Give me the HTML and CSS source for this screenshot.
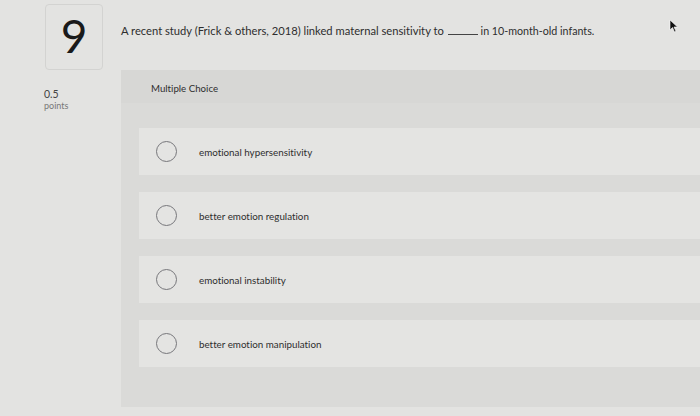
FILE: index.html
```html
<!DOCTYPE html>
<html>
<head>
<meta charset="utf-8">
<link rel="stylesheet" href="styles.css">
</head>
<body>
<div class="page">
  <div class="left">
    <div class="numbox">9</div>
    <div class="points">
      <div class="pts-val">0.5</div>
      <div class="pts-lbl">points</div>
    </div>
  </div>
  <div class="right">
    <div class="question">A recent study (Frick &amp; others, 2018) linked maternal sensitivity to <span class="blank"></span> <span class="tail">in 10-month-old infants.</span></div>
    <div class="panel">
      <div class="panel-head">Multiple Choice</div>
      <div class="options">
        <div class="option"><span class="radio"></span><span class="opt-text">emotional hypersensitivity</span></div>
        <div class="option"><span class="radio"></span><span class="opt-text">better emotion regulation</span></div>
        <div class="option"><span class="radio"></span><span class="opt-text">emotional instability</span></div>
        <div class="option"><span class="radio"></span><span class="opt-text">better emotion manipulation</span></div>
      </div>
    </div>
  </div>
</div>
<svg class="cursor" width="10" height="14" viewBox="0 0 10 14"><path d="M1 1 L1 11 L3.5 8.5 L5.5 13 L7 12.3 L5 8 L8.5 8 Z" fill="#111" stroke="#fff" stroke-width="0.6"/></svg>
</body>
</html>
```
FILE: styles.css
```css
html, body {
  margin: 0;
  padding: 0;
}
body {
  width: 700px;
  height: 416px;
  overflow: hidden;
  background: #e3e3e1;
  font-family: "Lato", "Open Sans", sans-serif;
  font-variant-ligatures: none;
  color: #2a2a2a;
  position: relative;
}
.page {
  display: flex;
  padding-top: 4px;
}
.left {
  width: 77px;
  padding-left: 44px;
  flex: none;
}
.numbox {
  width: 58px;
  height: 66px;
  margin-left: 1px;
  box-sizing: border-box;
  border: 1px solid #d3d3d1;
  border-radius: 4px;
  display: flex;
  align-items: center;
  justify-content: center;
  font-size: 46px;
  font-weight: 400;
  color: #1a1a1a;
  padding-bottom: 4px;
}
.points {
  margin-top: 18px;
}
.pts-val {
  font-size: 10.5px;
  color: #444;
  line-height: 12px;
}
.pts-lbl {
  font-size: 9px;
  color: #777;
  line-height: 11px;
}
.right {
  flex: 1;
  display: flex;
  flex-direction: column;
}
.question {
  height: 66px;
  box-sizing: border-box;
  padding-top: 20px;
  font-size: 11.2px;
  color: #2e2e2e;
  white-space: nowrap;
}
.tail {
  font-size: 10.7px;
}
.blank {
  display: inline-block;
  width: 30px;
  border-bottom: 1px solid #444;
  vertical-align: baseline;
  margin: 0 0 0 1px;
}
.panel {
  background: #dadad8;
  height: 337px;
}
.panel-head {
  height: 33px;
  box-sizing: border-box;
  padding: 12px 0 0 30px;
  font-size: 9.7px;
  color: #2e2e2e;
  background: #d7d7d5;
}
.options {
  padding: 25px 0 0 18px;
  display: flex;
  flex-direction: column;
  gap: 17px;
}
.option {
  height: 47px;
  background: #e4e4e2;
  display: flex;
  align-items: center;
  padding-left: 17px;
}
.radio {
  width: 19px;
  height: 19px;
  border: 1.5px solid #77777b;
  border-radius: 50%;
  flex: none;
}
.opt-text {
  margin-left: 22px;
  font-size: 9.8px;
  color: #2e2e2e;
}
.cursor {
  position: absolute;
  left: 669px;
  top: 19px;
}
```
